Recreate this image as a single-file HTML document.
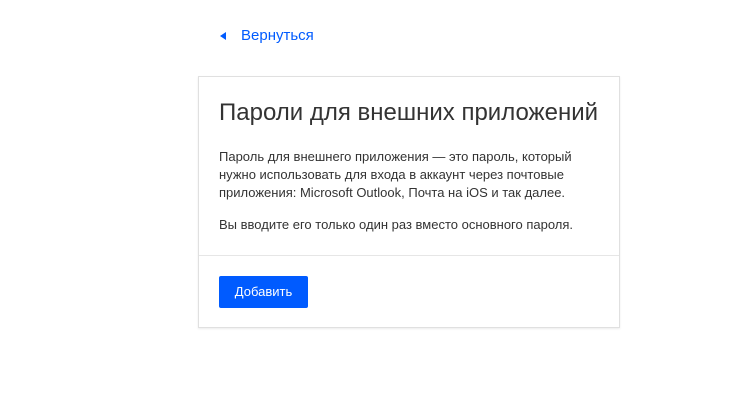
<!DOCTYPE html>
<html><head><meta charset="utf-8"><style>
body{margin:0;background:#fff;font-family:"Liberation Sans",sans-serif;width:740px;height:400px;position:relative;overflow:hidden}
.back{position:absolute;left:220px;top:27px;font-size:15px;color:#005bff;line-height:18px}
.back i{position:absolute;left:0;top:5px;width:0;height:0;border-top:4px solid transparent;border-bottom:4px solid transparent;border-right:6px solid #005bff}
.back span{position:absolute;left:21px;white-space:nowrap}
.card{position:absolute;left:198px;top:76px;width:420px;height:250px;border:1px solid #e0e0e0;box-shadow:0 1px 2px rgba(0,0,0,.08)}
h1{position:absolute;left:20px;top:20px;margin:0;font-weight:400;font-size:24px;color:#333;line-height:32px;white-space:nowrap}
p{position:absolute;left:20px;margin:0;font-size:13px;line-height:18px;color:#333;width:390px}
hr{position:absolute;left:0;top:178px;width:420px;margin:0;border:0;border-top:1px solid #e6e6e6}
.btn{position:absolute;left:20px;top:199px;width:89px;height:32px;background:#005bff;border-radius:2px;color:#fff;font-size:13px;line-height:32px;text-align:center}
</style></head><body>
<div class="back"><i></i><span>Вернуться</span></div>
<div class="card">
<h1>Пароли для внешних приложений</h1>
<p style="top:71px">Пароль для внешнего приложения — это пароль, который нужно использовать для входа в аккаунт через почтовые приложения: Microsoft Outlook, Почта на iOS и так далее.</p>
<p style="top:139px">Вы вводите его только один раз вместо основного пароля.</p>
<hr>
<div class="btn">Добавить</div>
</div>
</body></html>
